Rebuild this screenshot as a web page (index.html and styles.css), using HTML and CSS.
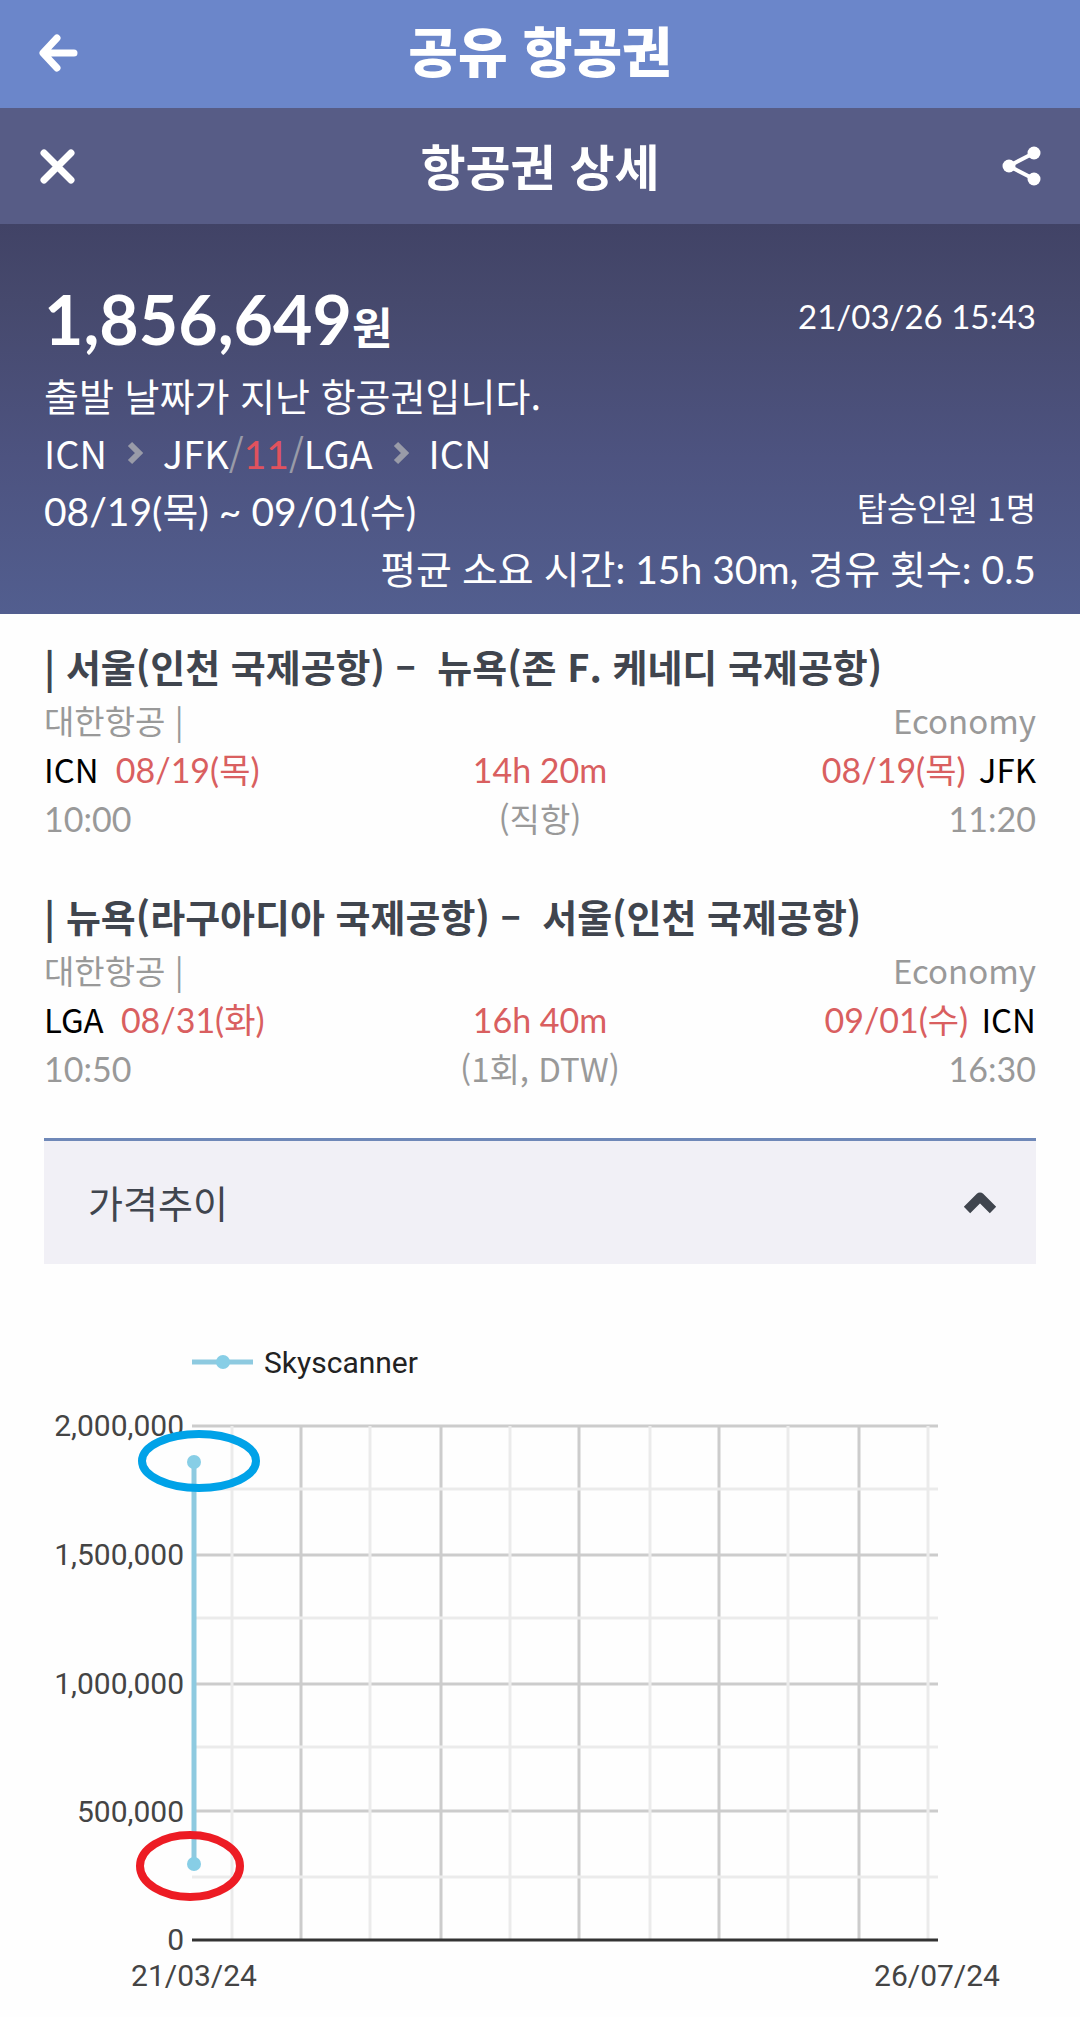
FILE: index.html
```html
<!DOCTYPE html>
<html lang="ko">
<head>
    <meta charset="UTF-8">
    <meta name="viewport" content="width=device-width, initial-scale=1.0">
    <title>공유 항공권</title>
    <link rel="stylesheet" href="styles.css">
</head>

<body>
    <header class="top-bar">
        <button class="icon-button" aria-label="뒤로">
            <svg width="40" height="40" viewBox="0 0 40 40"><path d="M19 4L5 19l14 15M6 19h30" /></svg>
        </button>
        <h1>공유 항공권</h1>
    </header>

    <div class="sub-bar">
        <button class="icon-button" aria-label="닫기">
            <svg width="40" height="40" viewBox="0 0 40 40"><path d="M6 7l27 27M33 7L6 34" /></svg>
        </button>
        <h2>항공권 상세</h2>
        <button class="icon-button" aria-label="공유">
            <svg class="share-icon" width="40" height="40" viewBox="0 0 40 40">
                <path d="M32 7L7 20l25 13" />
                <circle cx="7" cy="20" r="6.5" />
                <circle cx="32" cy="7" r="6.5" />
                <circle cx="32" cy="33" r="6.5" />
            </svg>
        </button>
    </div>

    <section class="summary">
        <div class="row price-row">
            <div class="price">1,856,649<span class="won">원</span></div>
            <div class="searched num">21/03/26 15:43</div>
        </div>
        <div class="row">출발 날짜가 지난 항공권입니다.</div>
        <div class="row route">
            <span>ICN</span>
            <svg class="chevron" width="16" height="26" viewBox="0 0 16 26"><path d="M3 4l9 9-9 9" /></svg>
            <span>JFK<span class="slash">/</span><span class="stay num">11</span><span class="slash">/</span>LGA</span>
            <svg class="chevron" width="16" height="26" viewBox="0 0 16 26"><path d="M3 4l9 9-9 9" /></svg>
            <span>ICN</span>
        </div>
        <div class="row">
            <span class="num">08/19(목) ~ 09/01(수)</span>
            <span class="people">탑승인원 1명</span>
        </div>
        <div class="row average num">평균 소요 시간: 15h 30m, 경유 횟수: 0.5</div>
    </section>

    <main>
        <section class="flight">
            <h3>| 서울(인천 국제공항) –&nbsp; 뉴욕(존 F. 케네디 국제공항)</h3>
            <div class="flight-row airline">
                <span>대한항공 |</span>
                <span></span>
                <span>Economy</span>
            </div>
            <div class="flight-row">
                <span class="stop">ICN <span class="date">08/19(목)</span></span>
                <span class="date">14h 20m</span>
                <span class="stop"><span class="date">08/19(목)</span> JFK</span>
            </div>
            <div class="flight-row time">
                <span class="num">10:00</span>
                <span>(직항)</span>
                <span class="num">11:20</span>
            </div>
        </section>

        <section class="flight">
            <h3>| 뉴욕(라구아디아 국제공항) –&nbsp; 서울(인천 국제공항)</h3>
            <div class="flight-row airline">
                <span>대한항공 |</span>
                <span></span>
                <span>Economy</span>
            </div>
            <div class="flight-row">
                <span class="stop">LGA <span class="date">08/31(화)</span></span>
                <span class="date">16h 40m</span>
                <span class="stop"><span class="date">09/01(수)</span> ICN</span>
            </div>
            <div class="flight-row time">
                <span class="num">10:50</span>
                <span>(1회, DTW)</span>
                <span class="num">16:30</span>
            </div>
        </section>

        <button class="accordion" aria-expanded="true">
            가격추이
            <svg width="36" height="26" viewBox="0 0 36 26"><path d="M5 21L18 8l13 13" /></svg>
        </button>

        <svg class="chart" viewBox="0 0 992 753" role="img" aria-label="가격추이">
            <!-- legend -->
            <path class="series" d="M148 98h61" />
            <circle class="dot" cx="179" cy="98" r="7" />
            <text class="legend" x="220" y="109">Skyscanner</text>

            <!-- grid -->
            <path class="major" d="M257 162v514M397 162v514M535 162v514M675 162v514M815 162v514" />
            <path class="major" d="M148 162h746M148 291h746M148 420h746M148 547h746" />
            <path class="minor" d="M188 162v514M326 162v514M466 162v514M606 162v514M744 162v514M884 162v514" />
            <path class="minor" d="M148 225h746M148 354h746M148 483h746M148 613h746" />
            <path class="axis" d="M148 676h746" />

            <g class="y-labels">
                <text x="140" y="172">2,000,000</text>
                <text x="140" y="301">1,500,000</text>
                <text x="140" y="430">1,000,000</text>
                <text x="140" y="558">500,000</text>
                <text x="140" y="686">0</text>
            </g>
            <g class="x-labels">
                <text x="150" y="722">21/03/24</text>
                <text x="893" y="722">26/07/24</text>
            </g>

            <path class="series" d="M150 198v402" />
            <circle class="dot" cx="150" cy="198" r="7" />
            <circle class="dot" cx="150" cy="600" r="7" />

            <!-- highest and lowest price -->
            <ellipse class="mark high" cx="155" cy="197" rx="57" ry="27" />
            <ellipse class="mark low" cx="146" cy="602" rx="50" ry="31" />
        </svg>
    </main>
</body>
</html>
```
FILE: styles.css
```css
* {
    box-sizing: border-box;
}

body {
    margin: 0;
    background-color: #fefefe;
    font-family: 'Noto Sans CJK KR', sans-serif;
    color: #000;
}

h1, h2, h3 {
    margin: 0;
}

button {
    border: none;
    padding: 0;
    background: none;
    font-family: inherit;
    cursor: pointer;
}

.num,
.date {
    font-family: Lato, 'Noto Sans CJK KR', sans-serif;
}

.top-bar,
.sub-bar {
    display: grid;
    grid-template-columns: 40px 1fr 40px;
    align-items: center;
    padding: 0 38px;
    color: #fff;
    text-align: center;
}

.top-bar {
    height: 108px;
    background-color: #6b86ca;
}

.top-bar h1 {
    padding-bottom: 8px;
    font-size: 54px;
    font-weight: 900;
    line-height: 80px;
}

.sub-bar {
    height: 116px;
    background-color: #575c86;
}

.sub-bar h2 {
    padding-bottom: 2px;
    font-size: 49px;
    font-weight: 700;
    line-height: 72px;
}

.icon-button {
    width: 40px;
    height: 40px;
}

.icon-button svg {
    display: block;
    fill: none;
    stroke: #fff;
    stroke-width: 7;
    stroke-linecap: round;
    stroke-linejoin: round;
}

.icon-button .share-icon {
    fill: #fff;
    stroke: none;
}

.share-icon path {
    fill: none;
    stroke: #fff;
    stroke-width: 4;
}

.summary {
    padding: 56px 44px 16px;
    background: linear-gradient(#414366, #46496d 20%, #4d5380 60%, #525e8f);
    color: #fff;
    font-size: 38px;
}

.summary .num {
    font-size: 39px;
}

.row {
    display: flex;
    justify-content: space-between;
    align-items: flex-start;
    height: 58px;
    line-height: 58px;
}

.price-row {
    height: 86px;
}

.price {
    font-family: Lato, 'Noto Sans CJK KR', sans-serif;
    font-size: 68px;
    font-weight: 700;
    line-height: 78px;
}

.won {
    font-size: 44px;
}

.summary .searched {
    font-size: 33px;
    line-height: 72px;
}

.route {
    align-items: center;
    justify-content: flex-start;
    gap: 20px;
}

.chevron {
    fill: none;
    stroke: #999ba8;
    stroke-width: 6;
}

.slash {
    color: #999ba8;
}

.stay {
    color: #e0525e;
}

.people {
    font-size: 33px;
    line-height: 50px;
}

.row.average {
    justify-content: flex-end;
}

main {
    padding: 24px 44px 0;
}

.flight {
    margin-bottom: 45px;
    font-size: 33px;
}

.flight h3 {
    padding-bottom: 2px;
    color: #40454e;
    font-size: 38px;
    font-weight: 700;
    line-height: 56px;
}

.flight-row {
    display: grid;
    grid-template-columns: 1fr 1fr 1fr;
    height: 49px;
    line-height: 49px;
    text-align: center;
}

.flight-row .num,
.flight-row .date {
    font-size: 34px;
}

.flight-row > :first-child {
    text-align: left;
}

.flight-row > :last-child {
    text-align: right;
}

.airline,
.time {
    color: #999;
}

.date {
    color: #d95f60;
}

.stop:last-child .date {
    margin-right: 4px;
}

.stop:first-child .date {
    margin-left: 8px;
}

.accordion {
    display: flex;
    justify-content: space-between;
    align-items: center;
    width: 100%;
    height: 126px;
    padding: 0 38px 2px 44px;
    border-top: 3px solid #6f88b8;
    background-color: #f1f0f6;
    color: #40454e;
    font-size: 38px;
}

.accordion svg {
    fill: none;
    stroke: #40454e;
    stroke-width: 9;
    stroke-linejoin: round;
}

.chart {
    display: block;
    width: 100%;
    font-family: Roboto, sans-serif;
    font-size: 30px;
    fill: #444;
}

.series {
    stroke: #8ecae0;
    stroke-width: 5;
}

.dot {
    fill: #87cee6;
}

.legend {
    fill: #222;
}

.major {
    stroke: #ccc;
    stroke-width: 3;
}

.minor {
    stroke: #ebebeb;
    stroke-width: 3;
}

.axis {
    stroke: #333;
    stroke-width: 3;
}

.y-labels {
    text-anchor: end;
}

.x-labels {
    text-anchor: middle;
}

.mark {
    fill: none;
    stroke-width: 8;
}

.high {
    stroke: #00a2e8;
}

.low {
    stroke: #ed1c24;
}
```
